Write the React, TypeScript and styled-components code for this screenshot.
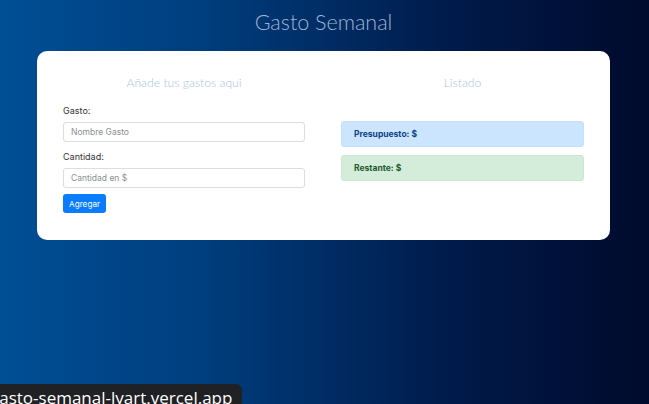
import React from "react";
import styled, { createGlobalStyle } from "styled-components";

const Global = createGlobalStyle`
  html, body { margin: 0; padding: 0; }
  body {
    min-height: 100vh;
    background: linear-gradient(to right, #004e95 0%, #003f7f 30%, #001a4a 70%, #000a2c 100%);
    font-family: "Inter", "Liberation Sans", sans-serif;
    overflow: hidden;
  }
  #root { min-height: 100vh; }
`;

const Page = styled.div`
  width: 573px;
  margin: 0 39px 0 37px;
`;

const Title = styled.h1`
  margin: 0;
  padding-top: 8px;
  height: 43px;
  line-height: 28px;
  text-align: center;
  font-family: "Lato", "Open Sans", sans-serif;
  font-weight: 300;
  font-size: 21.5px;
  color: #9fb4d6;
`;

const Card = styled.div`
  background: #fff;
  border-radius: 10px;
  padding: 24px 26px 27px;
  display: grid;
  grid-template-columns: 242px 243px;
  column-gap: 36px;
`;

const Column = styled.div`
  display: flex;
  flex-direction: column;
`;

const SectionTitle = styled.h2`
  margin: 0 0 13px;
  text-align: center;
  font-family: "Lato", "Open Sans", sans-serif;
  font-weight: 300;
  font-size: 12.2px;
  line-height: 16px;
  color: #a9c3df;
`;

const Field = styled.div`
  display: flex;
  flex-direction: column;
  gap: 4px;
  margin-bottom: 8px;
`;

const Label = styled.label`
  font-size: 9px;
  line-height: 14px;
  color: #333;
`;

const Input = styled.input`
  box-sizing: border-box;
  height: 20px;
  width: 100%;
  border: 1px solid #dadde1;
  border-radius: 3px;
  padding: 0 7px;
  font-family: inherit;
  font-size: 8.5px;
  color: #495057;
  outline: none;
  &::placeholder { color: #8a8f95; }
`;

const Button = styled.button`
  align-self: flex-start;
  margin-top: -2px;
  height: 19px;
  padding: 0 6px;
  border: none;
  border-radius: 3px;
  background: #0a7cff;
  color: #fff;
  font-family: inherit;
  font-size: 8.2px;
  cursor: pointer;
`;

const Alert = styled.div<{ $variant: "info" | "ok" }>`
  box-sizing: border-box;
  height: 26px;
  display: flex;
  align-items: center;
  padding: 0 12px;
  border-radius: 3px;
  font-size: 8.5px;
  font-weight: 700;
  background: ${(p) => (p.$variant === "info" ? "#cce5ff" : "#d4edda")};
  color: ${(p) => (p.$variant === "info" ? "#0b3f86" : "#1d5a2c")};
  border: 1px solid ${(p) => (p.$variant === "info" ? "#c4e0fe" : "#cbe8d3")};
  & + & { margin-top: 8px; }
`;

const AlertSpacer = styled.div`
  height: 17px;
`;

const StatusBar = styled.div`
  position: fixed;
  left: -10px;
  bottom: -8px;
  height: 28px;
  padding: 0 10px 0 0;
  background: #202124;
  border-top-right-radius: 6px;
  color: #fff;
  font-family: "Open Sans", "Noto Sans", sans-serif;
  font-size: 17px;
  line-height: 28px;
  white-space: nowrap;
`;

export default function App() {
  return (
    <>
      <Global />
      <Page>
        <Title>Gasto Semanal</Title>
        <Card>
          <Column>
            <SectionTitle>Añade tus gastos aqui</SectionTitle>
            <Field>
              <Label>Gasto:</Label>
              <Input placeholder="Nombre Gasto" />
            </Field>
            <Field>
              <Label>Cantidad:</Label>
              <Input placeholder="Cantidad en $" />
            </Field>
            <Button>Agregar</Button>
          </Column>
          <Column>
            <SectionTitle>Listado</SectionTitle>
            <AlertSpacer />
            <Alert $variant="info">Presupuesto: $</Alert>
            <Alert $variant="ok">Restante: $</Alert>
          </Column>
        </Card>
      </Page>
      <StatusBar>gasto-semanal-lyart.vercel.app</StatusBar>
    </>
  );
}
